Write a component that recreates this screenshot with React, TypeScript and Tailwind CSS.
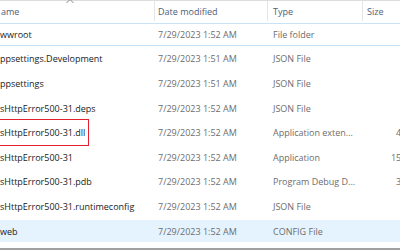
type Row = {
  name: string;
  date: string;
  type: string;
  size: string;
  state?: "focus" | "selected";
};

const rows: Row[] = [
  { name: "wwroot", date: "7/29/2023 1:52 AM", type: "File folder", size: "", state: "focus" },
  { name: "ppsettings.Development", date: "7/29/2023 1:51 AM", type: "JSON File", size: "" },
  { name: "ppsettings", date: "7/29/2023 1:51 AM", type: "JSON File", size: "" },
  { name: "sHttpError500-31.deps", date: "7/29/2023 1:52 AM", type: "JSON File", size: "" },
  { name: "sHttpError500-31.dll", date: "7/29/2023 1:52 AM", type: "Application exten...", size: "43 KB" },
  { name: "sHttpError500-31", date: "7/29/2023 1:52 AM", type: "Application", size: "155 KB" },
  { name: "sHttpError500-31.pdb", date: "7/29/2023 1:52 AM", type: "Program Debug D...", size: "37 KB" },
  { name: "sHttpError500-31.runtimeconfig", date: "7/29/2023 1:52 AM", type: "JSON File", size: "" },
  { name: "web", date: "7/29/2023 1:52 AM", type: "CONFIG File", size: "", state: "selected" },
];

const rowClass = (state?: Row["state"]) => {
  if (state === "focus") return "border-y border-[#c8e3f8] bg-white";
  if (state === "selected") return "bg-[#e5f3ff]";
  return "bg-white";
};

export default function App() {
  return (
    <div
      className="relative flex h-[250px] w-[400px] flex-col overflow-hidden bg-white text-[9px] leading-none"
      style={{ fontFamily: '"Open Sans", "Noto Sans", sans-serif' }}
    >
      {/* column headers */}
      <div className="flex h-[21px] shrink-0 items-center border-t border-[#dcdcdc] text-[#4c607a]">
        <div className="relative flex h-full w-[154px] items-center pl-[1px]">
          ame
          <svg
            className="absolute left-[66px] top-[-3px]"
            width="8"
            height="6"
            viewBox="0 0 8 6"
            fill="none"
          >
            <path d="M0.5 5 L4 1.5 L7.5 5" stroke="#8a8a8a" strokeWidth="1" />
          </svg>
        </div>
        <div className="flex h-full w-[113px] items-center border-l border-[#e5e5e5] pl-[3px]">
          Date modified
        </div>
        <div className="flex h-full w-[95px] items-center border-l border-[#e5e5e5] pl-[5px]">
          Type
        </div>
        <div className="flex h-full flex-1 items-center border-l border-[#e5e5e5] pl-[4px]">
          Size
        </div>
      </div>

      {/* file rows */}
      <div className="mt-[2px] flex flex-col gap-[2px]">
        {rows.map((r) => (
          <div
            key={r.name}
            className={`flex h-[22.6px] shrink-0 items-center whitespace-nowrap ${rowClass(r.state)}`}
          >
            <div className="w-[158px] shrink-0 text-[#1a1a1a]">{r.name}</div>
            <div className="w-[115px] shrink-0 text-[#6d6d6d]">{r.date}</div>
            <div className="w-[94px] shrink-0 text-[#6d6d6d]">{r.type}</div>
            <div className="w-[53px] shrink-0 text-right text-[#6d6d6d]">{r.size}</div>
          </div>
        ))}
      </div>

      <div className="flex-1" />
      <div className="h-[2px] shrink-0 bg-[#a0a0a0]" />

      {/* annotation box around the dll */}
      <div className="absolute left-[-4px] top-[119px] h-[27px] w-[93px] border border-[#e5202e]" />
    </div>
  );
}
